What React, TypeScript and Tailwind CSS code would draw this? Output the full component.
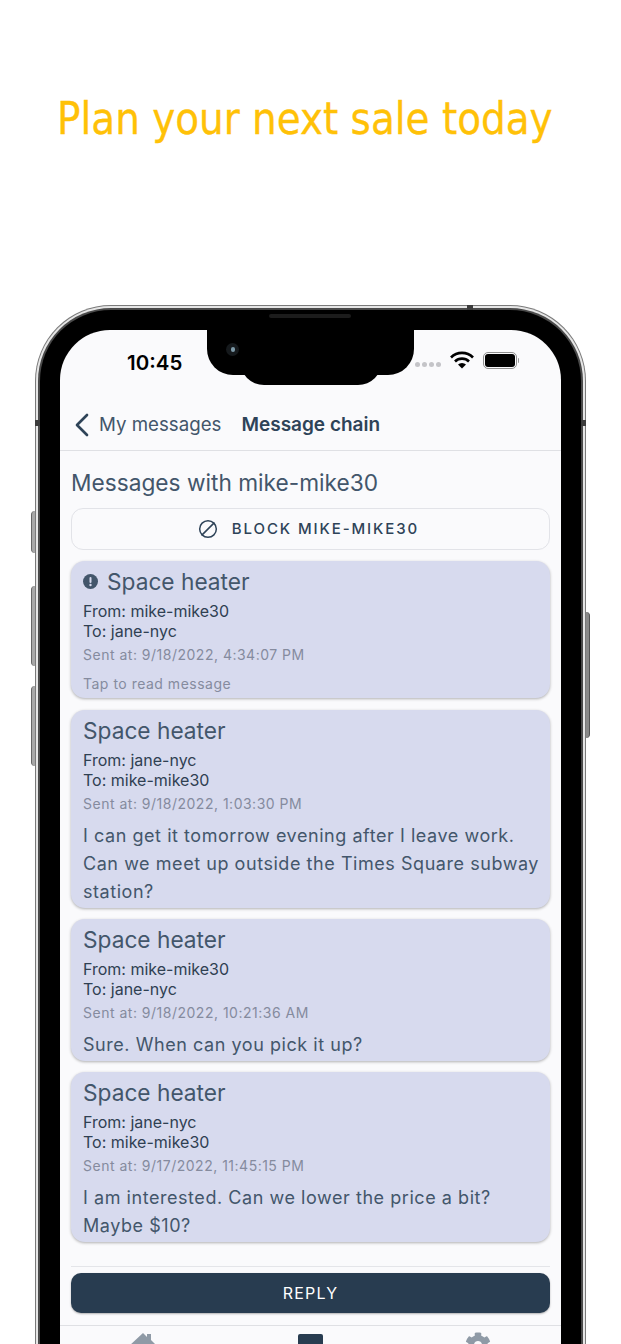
import { ChevronLeft, Ban } from "lucide-react";
import { FaCog } from "react-icons/fa";

const messages = [
  {
    from: "jane-nyc",
    to: "mike-mike30",
    sent: "9/18/2022, 1:03:30 PM",
    body: "I can get it tomorrow evening after I leave work. Can we meet up outside the Times Square subway station?",
  },
  {
    from: "mike-mike30",
    to: "jane-nyc",
    sent: "9/18/2022, 10:21:36 AM",
    body: "Sure. When can you pick it up?",
  },
  {
    from: "jane-nyc",
    to: "mike-mike30",
    sent: "9/17/2022, 11:45:15 PM",
    body: "I am interested. Can we lower the price a bit? Maybe $10?",
  },
];

function StatusBar() {
  return (
    <div className="relative flex h-[70px] shrink-0 items-start justify-between">
      <span className="ml-[67px] mt-[20px] text-[20.5px] leading-[26px] font-semibold text-black">10:45</span>
      <div className="mr-[42px] mt-[21px] flex items-center">
        <div className="mt-[8px] mr-[9px] flex gap-[2px]">
          <span className="h-[5px] w-[5px] rounded-full bg-[#c4c4c8]" />
          <span className="h-[5px] w-[5px] rounded-full bg-[#c4c4c8]" />
          <span className="h-[5px] w-[5px] rounded-full bg-[#c4c4c8]" />
          <span className="h-[5px] w-[5px] rounded-full bg-[#c4c4c8]" />
        </div>
        <svg width="24" height="18" viewBox="0 0 24 18" className="mr-[9px]">
          <path d="M1 6.5a15.5 15.5 0 0 1 22 0" fill="none" stroke="#000" strokeWidth="2.6" />
          <path d="M5 10.5a10 10 0 0 1 14 0" fill="none" stroke="#000" strokeWidth="2.6" />
          <path d="M8 13.5a5.8 5.8 0 0 1 8 0L12 17.5z" fill="#000" />
        </svg>
        <div className="flex items-center">
          <div className="flex h-[17px] w-[34px] items-center justify-center rounded-[5px] border border-[#8f8f8f] p-[1px]">
            <div className="h-full w-full rounded-[3px] bg-black" />
          </div>
          <div className="ml-[1px] h-[5px] w-[1.5px] rounded-r bg-[#999]" />
        </div>
      </div>
    </div>
  );
}

function MessageCard({
  from,
  to,
  sent,
  body,
}: {
  from: string;
  to: string;
  sent: string;
  body: string;
}) {
  return (
    <div className="rounded-[14px] bg-[#d7daee] pt-[7px] pr-[8px] pb-[2px] pl-3 shadow-[0_1px_3px_rgba(0,0,0,0.3)]">
      <p className="text-[22.7px] leading-[28px] text-[#43566b]">Space heater</p>
      <p className="mt-[5px] text-[16px] leading-[20px] text-[#2f4052]">From: {from}</p>
      <p className="text-[16px] leading-[20px] text-[#2f4052]">To: {to}</p>
      <p className="mt-[4px] text-[14px] leading-[20px] tracking-[0.5px] text-[#858b9e]">Sent at: {sent}</p>
      <p className="mt-[8px] text-[18px] leading-[28px] tracking-[0.55px] text-[#43566b]">{body}</p>
    </div>
  );
}

export default function App() {
  return (
    <div className="relative h-[1344px] w-[621px] overflow-hidden bg-white font-['Inter',sans-serif]">
      <div className="pt-[91px] pl-[57px]">
        <h1 className="origin-left scale-x-[0.9725] font-['DejaVu_Sans_Condensed','DejaVu_Sans',sans-serif] text-[44.5px] leading-[56px] whitespace-nowrap text-[#ffc107] [-webkit-text-stroke:0.3px_#ffc107]">
          Plan your next sale today
        </h1>
      </div>

      {/* side buttons */}
      <div className="absolute top-[511px] left-[31px] h-[42px] w-[4px] rounded-l-sm border-l border-[#666666] bg-[#a8a8a8]" />
      <div className="absolute top-[586px] left-[31px] h-[80px] w-[4px] rounded-l-sm border-l border-[#666666] bg-[#a8a8a8]" />
      <div className="absolute top-[686px] left-[31px] h-[80px] w-[4px] rounded-l-sm border-l border-[#666666] bg-[#a8a8a8]" />
      <div className="absolute top-[612px] left-[586px] h-[126px] w-[4px] rounded-r-sm border-r border-[#555555] bg-[#8a8a8a]" />

      <div className="relative mt-[158px] ml-[35px] h-[1100px] w-[551px] rounded-t-[76px] bg-[#7a7a7a] p-[1px] pb-0">
        <div className="h-full rounded-t-[75px] bg-[#e6e6e6] p-[2px] pb-0">
          <div className="h-full rounded-t-[73px] bg-[#4a4a4a] p-[2px] pb-0">
            <div className="h-full rounded-t-[71px] bg-black px-[20px] pt-[20px]">
              <div className="relative h-full overflow-hidden rounded-t-[50px] bg-[#fafafc]">
                {/* notch */}
                <div className="absolute top-0 left-[147px] h-[45px] w-[207px] rounded-b-[26px] bg-black" />
                <div className="absolute top-[20px] left-[180px] h-[35px] w-[142px] rounded-b-[24px] bg-black" />
                <div className="absolute top-[13px] left-[166px] h-[13px] w-[13px] rounded-full bg-[#15191c]">
                  <div className="mt-[4px] ml-[5px] h-[5px] w-[4px] rounded-full bg-[#7d9aa8]" />
                </div>

                <StatusBar />

                <div className="flex h-[51px] items-center border-b border-[#dfe0e4]">
                  <ChevronLeft className="-mr-[2.5px] ml-[1.5px] h-[40px] w-[40px] text-[#2e4358]" strokeWidth={1.6} />
                  <span className="text-[18.7px] text-[#43566b]">My messages</span>
                  <span className="ml-[20px] text-[19px] font-semibold text-[#2e4358]">Message chain</span>
                </div>

                <div className="px-[11px]">
                  <h2 className="mt-[18px] text-[22.7px] leading-[28px] text-[#43566b]">Messages with mike-mike30</h2>
                  <div className="mt-[11px] flex h-[42px] items-center justify-center rounded-[12px] border border-[#e2e3e8] pr-[4px]">
                    <Ban className="mr-[14px] h-[20px] w-[20px] -scale-x-100 text-[#2e4358]" strokeWidth={1.8} />
                    <span className="text-[15px] font-medium tracking-[1.9px] text-[#2e4358]">BLOCK MIKE-MIKE30</span>
                  </div>

                  <div className="mt-[11px] flex flex-col gap-[11px]">
                    <div className="mb-[1px] rounded-[14px] bg-[#d7daee] px-3 pt-[7px] pb-[4px] shadow-[0_1px_3px_rgba(0,0,0,0.3)]">
                      <div className="flex items-center">
                        <svg width="15" height="15" viewBox="0 0 15 15" className="mr-[9px] mb-[2px]">
                          <circle cx="7.5" cy="7.5" r="7.5" fill="#43566b" />
                          <rect x="6.5" y="3" width="2" height="6" rx="1" fill="#d7daee" />
                          <circle cx="7.5" cy="11" r="1.2" fill="#d7daee" />
                        </svg>
                        <p className="text-[22.7px] leading-[28px] text-[#43566b]">Space heater</p>
                      </div>
                      <p className="mt-[5px] text-[16px] leading-[20px] text-[#2f4052]">From: mike-mike30</p>
                      <p className="text-[16px] leading-[20px] text-[#2f4052]">To: jane-nyc</p>
                      <p className="mt-[4px] text-[14px] leading-[20px] tracking-[0.5px] text-[#858b9e]">Sent at: 9/18/2022, 4:34:07 PM</p>
                      <p className="mt-[9px] text-[14px] leading-[20px] tracking-[0.5px] text-[#858b9e]">Tap to read message</p>
                    </div>
                    {messages.map(m => (
                      <MessageCard key={m.sent} {...m} />
                    ))}
                  </div>

                  <div className="mt-[24px] border-t border-[#e4e5e9] pt-[6px]">
                    <div className="flex h-[40px] items-center justify-center rounded-[10px] bg-[#283c50] shadow-[0_1px_2px_rgba(0,0,0,0.3)]">
                      <span className="text-[16px] tracking-[1.2px] text-white">REPLY</span>
                    </div>
                  </div>
                </div>

                <div className="mt-[12px] flex justify-between border-t border-[#dfe0e4]">
                  <svg width="30" height="22" viewBox="0 0 30 22" className="mt-[6px] ml-[68px]">
                    <path d="M15 1 1 14h4v8h20v-8h4l-6-6V2h-4v3z" fill="#8f9aa6" />
                  </svg>
                  <div className="mt-[8px] mr-[2px] h-[30px] w-[25px] rounded-t-[2px] bg-[#283c50]" />
                  <FaCog className="mt-[6px] mr-[70px] h-[26px] w-[26px] text-[#8f9aa6]" />
                </div>
              </div>
            </div>
          </div>
        </div>
        {/* speaker slit and antenna bands */}
        <div className="absolute top-[9px] left-[234px] h-[4px] w-[82px] rounded-full bg-[#1c1c1c]" />
        <div className="absolute top-0 left-[432px] h-[5px] w-[6px] bg-[#3c3c3c]" />
        <div className="absolute top-[115px] left-0 h-[6px] w-[5px] bg-[#3c3c3c]" />
        <div className="absolute top-[115px] right-0 h-[6px] w-[5px] bg-[#3c3c3c]" />
      </div>
    </div>
  );
}
